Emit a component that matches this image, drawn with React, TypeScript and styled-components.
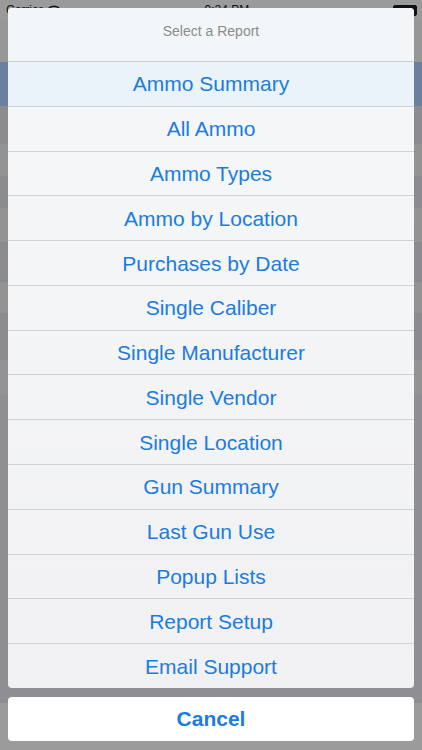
import React from "react";
import styled, { createGlobalStyle } from "styled-components";

const GlobalStyle = createGlobalStyle`
  html, body { margin: 0; padding: 0; }
  body {
    font-family: "Liberation Sans", Arial, Helvetica, sans-serif;
    background: #8e8e93;
  }
  * { box-sizing: border-box; }
`;

const Screen = styled.div`
  position: relative;
  width: 422px;
  height: 750px;
  overflow: hidden;
`;

/* ---------- dimmed app behind the sheet ---------- */
const Backdrop = styled.div`
  display: flex;
  flex-direction: column;
  height: 100%;
`;

const StatusBar = styled.div`
  height: 20px;
  flex: none;
  display: flex;
  align-items: center;
  justify-content: space-between;
  padding: 0 5px 0 6px;
  background: #9a9a9a;
  color: #111;
  font-size: 12px;
`;

const StatusLeft = styled.div`
  display: flex;
  align-items: center;
  gap: 4px;
`;

const Battery = styled.div`
  width: 24px;
  height: 11px;
  border: 1.5px solid #111;
  border-radius: 2px;
  background: #111;
`;

const Band = styled.div<{ $h: number; $bg: string }>`
  height: ${(p) => p.$h}px;
  flex: none;
  background: ${(p) => p.$bg};
`;

const Filler = styled.div`
  flex: 1;
  background: #8e8e93;
`;

/* ---------- action sheet overlay ---------- */
const Overlay = styled.div`
  position: absolute;
  inset: 0;
  display: flex;
  flex-direction: column;
  gap: 9px;
  padding: 8px 8px 9px;
`;

const Sheet = styled.div`
  height: 680px;
  flex: none;
  display: flex;
  flex-direction: column;
  border-radius: 4px;
  overflow: hidden;
  background: linear-gradient(180deg, #f5f7f9 0%, #f4f5f7 40%, #f1f1f3 100%);
`;

const Title = styled.div`
  height: 53px;
  flex: none;
  display: flex;
  align-items: center;
  justify-content: center;
  font-size: 14px;
  color: #8c8c8c;
  padding-bottom: 7px;
  background: #f3f6f8;
`;

const Option = styled.div<{ $tint?: boolean }>`
  flex: 1;
  display: flex;
  align-items: center;
  justify-content: center;
  border-top: 1px solid #cdd2d7;
  font-size: 21px;
  color: #1b7ce0;
  padding-top: 1px;
  background: ${(p) => (p.$tint ? "#eaf3fa" : "transparent")};
`;

const CancelButton = styled.div`
  height: 44px;
  flex: none;
  display: flex;
  align-items: center;
  justify-content: center;
  background: #ffffff;
  border-radius: 4px;
  font-size: 21px;
  font-weight: 700;
  color: #1b7ce0;
`;

const options = [
  "Ammo Summary",
  "All Ammo",
  "Ammo Types",
  "Ammo by Location",
  "Purchases by Date",
  "Single Caliber",
  "Single Manufacturer",
  "Single Vendor",
  "Single Location",
  "Gun Summary",
  "Last Gun Use",
  "Popup Lists",
  "Report Setup",
  "Email Support",
];

const bands: [number, string][] = [
  [42, "#979797"],
  [44, "#6b809f"],
  [38, "#8b8b90"],
  [32, "#939393"],
  [32, "#8b8b90"],
  [34, "#939393"],
  [40, "#8b8b90"],
  [31, "#939393"],
  [47, "#8b8b90"],
  [35, "#939393"],
];

export default function App() {
  return (
    <>
      <GlobalStyle />
      <Screen>
        <Backdrop>
          <StatusBar>
            <StatusLeft>
              <span>Carrier</span>
              <svg width="14" height="10" viewBox="0 0 14 10">
                <path d="M1 4 A8 8 0 0 1 13 4" stroke="#111" strokeWidth="1.6" fill="none" />
              </svg>
            </StatusLeft>
            <span>9:24 PM</span>
            <Battery />
          </StatusBar>
          {bands.map(([h, bg], i) => (
            <Band key={i} $h={h} $bg={bg} />
          ))}
          <Filler />
          <Band $h={47} $bg="#9b9b9b" />
        </Backdrop>
        <Overlay>
          <Sheet>
            <Title>Select a Report</Title>
            {options.map((o, i) => (
              <Option key={o} $tint={i === 0}>
                {o}
              </Option>
            ))}
          </Sheet>
          <CancelButton>Cancel</CancelButton>
        </Overlay>
      </Screen>
    </>
  );
}
